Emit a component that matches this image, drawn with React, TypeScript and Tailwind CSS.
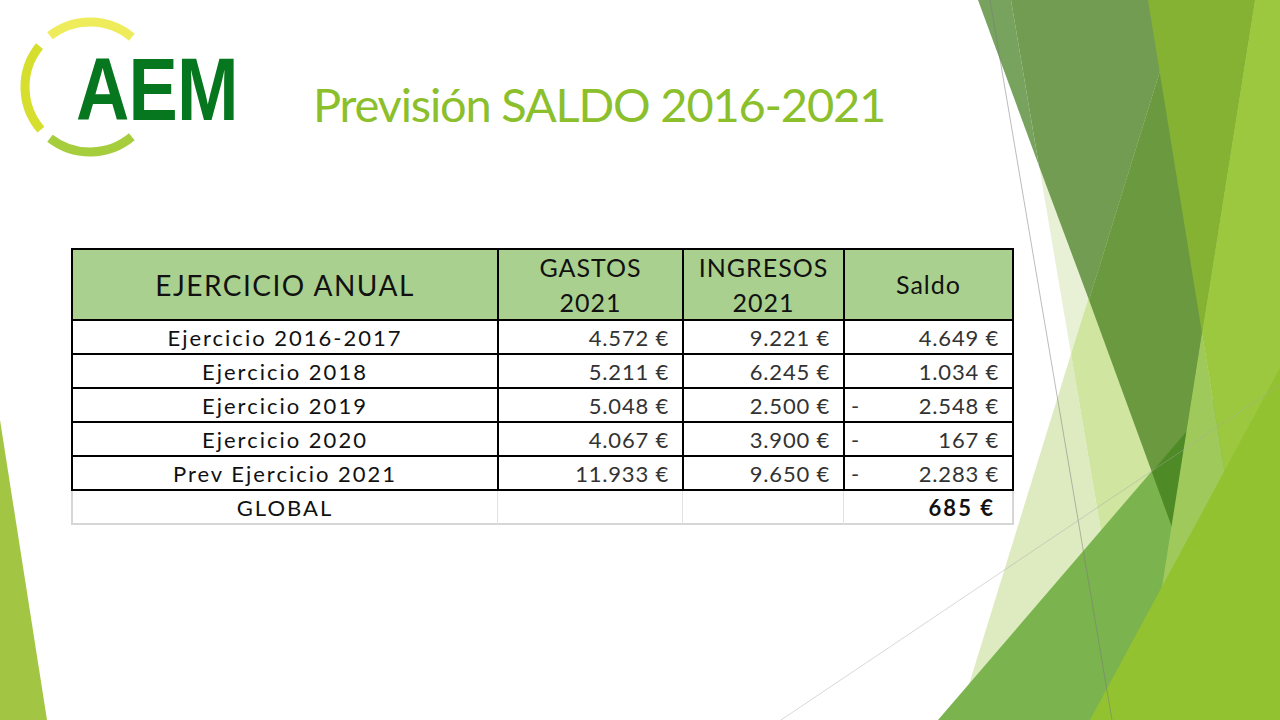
import React from "react";

interface Row {
  label: string;
  gastos: string;
  ingresos: string;
  saldo: string;
  negative?: boolean;
}

const rows: Row[] = [
  { label: "Ejercicio 2016-2017", gastos: "4.572 €", ingresos: "9.221 €", saldo: "4.649 €" },
  { label: "Ejercicio 2018", gastos: "5.211 €", ingresos: "6.245 €", saldo: "1.034 €" },
  { label: "Ejercicio 2019", gastos: "5.048 €", ingresos: "2.500 €", saldo: "2.548 €", negative: true },
  { label: "Ejercicio 2020", gastos: "4.067 €", ingresos: "3.900 €", saldo: "167 €", negative: true },
  { label: "Prev Ejercicio 2021", gastos: "11.933 €", ingresos: "9.650 €", saldo: "2.283 €", negative: true },
];

// facet-style background shards, page coordinates
const shards: { points: string; fill: string }[] = [
  { points: "1011,0 1182,0 1071,354", fill: "#e8f0d6" },
  { points: "1071,354 1133,720 958,720", fill: "#deebc1" },
  { points: "1182,0 1280,0 1280,720 1133,720 1071,354", fill: "#cfe5a0" },
  { points: "938,720 1280,322 1280,720", fill: "#7bb34f" },
  { points: "978,0 1011,0 1039,166", fill: "#77a35f" },
  { points: "1011,0 1182,0 1089,300 1039,166", fill: "#729c52" },
  { points: "1182,0 1255,0 1172,527 1089,300", fill: "#6a993f" },
  { points: "1152,472 1187,431 1172,527", fill: "#4e8a25" },
  { points: "1148,0 1255,0 1202,333", fill: "#86b234" },
  { points: "1202,333 1265,720 1141,720", fill: "#a0c95c" },
  { points: "1255,0 1280,0 1280,720 1265,720 1202,333", fill: "#9bc83e" },
  { points: "1090,720 1280,368 1280,720", fill: "#93c230" },
  { points: "0,420 47,720 0,720", fill: "#a2c644" },
];

const Backdrop = () => (
  <svg className="absolute inset-0" width="1280" height="720" viewBox="0 0 1280 720">
    {shards.map((s, i) => (
      <polygon key={i} points={s.points} fill={s.fill} />
    ))}
    <line x1="990" y1="0" x2="1112" y2="720" stroke="#7a7a7a" strokeOpacity="0.5" strokeWidth="1" />
    <line x1="781" y1="720" x2="1280" y2="385" stroke="#a8a8a8" strokeOpacity="0.45" strokeWidth="1" />
  </svg>
);

const Logo = () => (
  <div className="relative w-[250px] h-[170px]">
    <svg className="absolute inset-0" width="250" height="170" viewBox="0 0 250 170">
      <path d="M131.8 37.2 A65 65 0 0 0 50 35.8" fill="none" stroke="#eeec5a" strokeWidth="9" />
      <path d="M39.5 46.1 A65 65 0 0 0 40.9 129.6" fill="none" stroke="#d6de2e" strokeWidth="9" />
      <path d="M50 138.2 A65 65 0 0 0 131.8 136.8" fill="none" stroke="#a5cd3c" strokeWidth="9" />
    </svg>
    <div className="relative pt-[45px] pl-[76px]">
      <div className="origin-left scale-x-[0.83] font-['Liberation_Sans',sans-serif] font-bold text-[89px] leading-none tracking-[-1px] text-[#06761f]">
        AEM
      </div>
    </div>
  </div>
);

const App = () => {
  return (
    <div className="relative w-[1280px] h-[720px] overflow-hidden bg-white font-['Lato',sans-serif]">
      <Backdrop />

      <div className="relative flex">
        <Logo />
        <h1 className="pt-[81px] pl-[63px] text-[47px] leading-none tracking-[-1.2px] text-[#8cbf2c] whitespace-nowrap">
          Previsión SALDO 2016-2021
        </h1>
      </div>

      <div className="relative ml-[71px] mt-[78px] w-[943px]">
        <div className="border-2 border-black bg-white">
          <div className="grid grid-cols-[424px_185px_161px_169px] h-[69px] bg-[#a9d08e] text-[#111]">
            <div className="flex items-center justify-center text-[28px] tracking-[1.5px]">
              EJERCICIO ANUAL
            </div>
            <div className="flex flex-col items-center justify-center border-l-2 border-black text-[25px] leading-[35px] tracking-[1px]">
              <span>GASTOS</span>
              <span>2021</span>
            </div>
            <div className="flex flex-col items-center justify-center border-l-2 border-black text-[25px] leading-[35px] tracking-[1px]">
              <span>INGRESOS</span>
              <span>2021</span>
            </div>
            <div className="flex items-center justify-center border-l-2 border-black text-[25px] tracking-[1px]">
              Saldo
            </div>
          </div>

          {rows.map((r) => (
            <div
              key={r.label}
              className="grid grid-cols-[424px_185px_161px_169px] h-[34px] border-t-2 border-black text-[22px]"
            >
              <div className="flex items-center justify-center tracking-[2px] text-[#111]">{r.label}</div>
              <div className="flex items-center justify-end pr-[13px] border-l-2 border-black tracking-[0.8px] text-[#333]">
                {r.gastos}
              </div>
              <div className="flex items-center justify-end pr-[13px] border-l-2 border-black tracking-[0.8px] text-[#333]">
                {r.ingresos}
              </div>
              <div className="flex items-center justify-between pl-[6px] pr-[13px] border-l-2 border-black tracking-[0.8px] text-[#333]">
                <span>{r.negative ? "-" : ""}</span>
                <span>{r.saldo}</span>
              </div>
            </div>
          ))}
        </div>

        <div className="grid grid-cols-[424px_185px_161px_169px] h-[34px] border-2 border-t-0 border-[#d6d6d6] bg-white text-[22px] text-[#111]">
          <div className="flex items-center justify-center tracking-[2px]">GLOBAL</div>
          <div className="border-l border-[#e2e2e2]" />
          <div className="border-l border-[#e2e2e2]" />
          <div className="flex items-center justify-end pr-[17px] border-l border-[#e2e2e2] font-bold tracking-[2px]">
            685 €
          </div>
        </div>
      </div>
    </div>
  );
};

export default App;
